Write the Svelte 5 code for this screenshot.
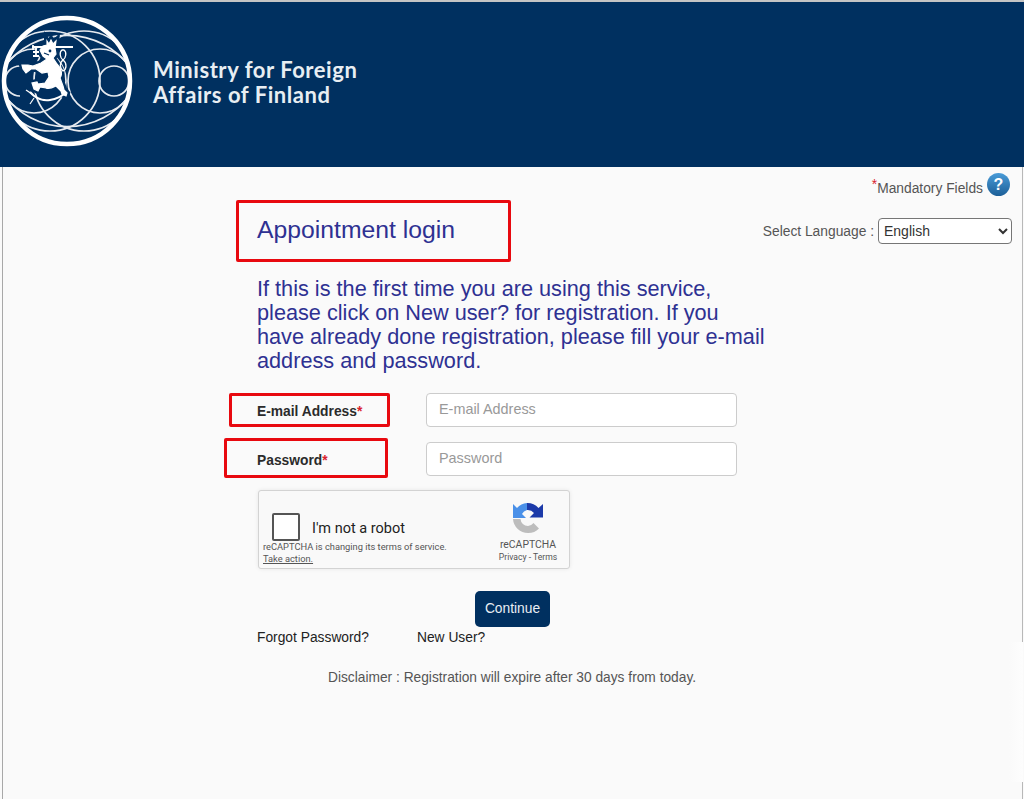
<script>
  let email = $state("");
  let password = $state("");
  let language = $state("English");
  let notRobot = $state(false);

  const lion = "M47 27 L49 30 L51 26 L53 30 L56 27 L55 34 L56 40 L53 44 L57 50 C61 54 63 60 60 64 L63 72 L64 76 L67 79 L66 82 L62 80 L61 77 L56 72 C52 74 48 75 46 74 L40 73 L38 77 L34 75 L32 69 L37 68 L38 70 L45 69 L49 63 L48 58 L42 59 L36 55 L31 55 L26 59 L23 55 L22 51 L28 51 L33 52 L41 49 L47 45 L43 42 L40 36 L43 32 L47 31 Z";
</script>

<div class="page">
  <header class="topbar">
    <svg class="logo" viewBox="0 0 134 134" aria-hidden="true">
      <defs>
        <clipPath id="ring-clip"><circle cx="67" cy="67" r="63" /></clipPath>
      </defs>
      <g fill="none" stroke="#fff">
        <g stroke-width="1.7" opacity="0.9" clip-path="url(#ring-clip)">
          <circle cx="114" cy="67" r="15" />
          <path d="M20 52 A15 15 0 0 0 20 82" />
          <circle cx="100" cy="67" r="32" />
          <circle cx="34" cy="67" r="32" />
          <circle cx="50" cy="67" r="50" />
          <circle cx="84" cy="67" r="50" />
          <path d="M5 52 A78 78 0 0 1 129 52" />
          <path d="M5 82 A78 78 0 0 0 129 82" />
        </g>
        <circle cx="67" cy="67" r="63" stroke-width="4.5" />
      </g>
      <!-- leijona -->
      <path d={lion} fill="#003060" stroke="#003060" stroke-width="6" />
      <path d="M32 33 L73 33" stroke="#fff" stroke-width="1.8" fill="none" />
      <path d={lion} fill="#fff" stroke="#fff" stroke-width="1.2" />
      <circle cx="50" cy="37" r="1.4" fill="#003060" />
      <path d="M44 39 L49 41" stroke="#003060" stroke-width="1.2" />
      <path d="M33 31 L33 36 M36 33 L36 43 M33 38 L39 38 M33 42 L39 42" stroke="#fff" stroke-width="1.8" fill="none" />
      <path d="M62 36 C59 38 60 44 63 46 C66 44 67 38 64 36 Z M63 46 C59 49 60 55 63 57 C67 55 67 49 63 46" stroke="#fff" stroke-width="1.3" fill="none" />
      <path d="M30 78 C36 85 44 87 50 86 C56 85 61 83 65 79" stroke="#fff" stroke-width="2" fill="none" />
      <path d="M26 76 L32 80" stroke="#fff" stroke-width="1.4" fill="none" />
      <path d="M34 84 L30 90" stroke="#fff" stroke-width="1.2" fill="none" />
    </svg>
    <div class="ministry">Ministry for Foreign<br />Affairs of Finland</div>
  </header>

  <main class="content">
    <section class="form">
      <div class="title-wrap">
        <h1>Appointment login</h1>
        <span class="mark mark-title"></span>
      </div>
      <p class="intro">
        If this is the first time you are using this service, please click on New user? for registration. If you have already done registration, please fill your e-mail address and password.
      </p>

      <div class="field first">
        <label for="email">E-mail Address<span class="req">*</span></label>
        <input id="email" type="text" placeholder="E-mail Address" bind:value={email} />
        <span class="mark mark-email"></span>
      </div>
      <div class="field">
        <label for="password">Password<span class="req">*</span></label>
        <input id="password" type="password" placeholder="Password" bind:value={password} />
        <span class="mark mark-password"></span>
      </div>

      <div class="captcha">
        <div class="captcha-left">
          <label class="robot">
            <input type="checkbox" bind:checked={notRobot} />
            <span>I'm not a robot</span>
          </label>
          <div class="terms">reCAPTCHA is changing its terms of service.</div>
          <a class="terms action" href="#top">Take action.</a>
        </div>
        <div class="captcha-right">
          <svg class="recaptcha" viewBox="0 0 32 32" aria-hidden="true">
            <path fill="#4a90e8" d="M15 1 A15 15 0 0 0 5 6 L1 2 L1 16 L14 16 L10 12 A7.5 7.5 0 0 1 15 8 Z" />
            <path fill="#1c3aa9" d="M15 1 A15 15 0 0 1 26.5 6 L31 2 L31 15.5 L17.5 15.5 L22 11 A8 8 0 0 0 15 8 Z" />
            <path fill="#bdbdbd" d="M1 17 L8.5 17 A7.5 7.5 0 0 0 16 24 A8 8 0 0 0 21.5 21 L27 26.5 A15 15 0 0 1 16 31 A15 15 0 0 1 1 17 Z" />
          </svg>
          <div class="brand">reCAPTCHA</div>
          <div class="links">Privacy - Terms</div>
        </div>
      </div>

      <button class="continue" type="button">Continue</button>
      <div class="user-links">
        <a href="#top">Forgot Password?</a>
        <a href="#top">New User?</a>
      </div>
      <p class="disclaimer">Disclaimer : Registration will expire after 30 days from today.</p>
    </section>

    <aside class="side">
      <div class="mandatory">
        <span class="mand-text"><span class="req sup">*</span>Mandatory Fields</span>
        <span class="help">?</span>
      </div>
      <div class="lang">
        <label for="lang">Select Language :</label>
        <select id="lang" bind:value={language}>
          <option>English</option>
          <option>Suomi</option>
          <option>Svenska</option>
        </select>
      </div>
    </aside>
    <div class="edge-fade"></div>
  </main>
</div>

<style>
  :global(body) {
    margin: 0;
    background: #fafafa;
    font-family: "Liberation Sans", Arial, sans-serif;
  }

  .page {
    height: 799px;
    box-sizing: border-box;
    overflow: hidden;
    display: flex;
    flex-direction: column;
    background: #fafafa;
    border-top: 2px solid #c4c4c4;
  }

  .topbar {
    height: 165px;
    flex: none;
    background: #003060;
    display: flex;
    align-items: center;
    gap: 19px;
  }

  .logo {
    width: 134px;
    height: 134px;
    flex: none;
    margin-top: -8px;
  }

  .ministry {
    color: #e8eef3;
    font-family: Lato, "Open Sans", sans-serif;
    font-weight: 700;
    font-size: 22px;
    line-height: 25px;
    letter-spacing: 0.55px;
    margin-top: -6px;
  }

  .content {
    position: relative;
    flex: 1;
    display: flex;
    margin-left: 2px;
    margin-right: 1px;
    border-left: 1px solid #a8a8a8;
    border-right: 1px solid #b8b8b8;
  }

  .edge-fade {
    position: absolute;
    right: -1px;
    top: 475px;
    width: 14px;
    height: 140px;
    background: linear-gradient(to right, #fafafa, #fdfdfd);
  }

  .form {
    width: 506px;
    flex: none;
    padding-left: 254px;
    box-sizing: content-box;
  }

  .title-wrap {
    position: relative;
    margin-top: 46px;
  }

  h1 {
    margin: 0;
    color: #2e3192;
    font-size: 24.75px;
    line-height: 33px;
    font-weight: 400;
  }

  .intro {
    margin: 31px -4px 0 0;
    color: #2e3192;
    font-size: 21.7px;
    line-height: 24px;
  }

  .mark {
    position: absolute;
    border: 3px solid #e8090f;
    border-radius: 2px;
    box-sizing: border-box;
  }

  .mark-title {
    left: -21px;
    top: -13px;
    width: 275px;
    height: 62px;
  }

  .mark-email {
    left: -28px;
    top: 0;
    width: 161px;
    height: 34px;
  }

  .mark-password {
    left: -33px;
    top: -4px;
    width: 164px;
    height: 40px;
  }

  .field {
    position: relative;
    display: flex;
    align-items: center;
    width: 480px;
    height: 34px;
    margin-top: 15px;
  }

  .field.first {
    margin-top: 20px;
  }

  .field label {
    width: 169px;
    flex: none;
    color: #2b2b2b;
    font-size: 13.8px;
    font-weight: 700;
    padding-top: 2px;
  }

  .req {
    color: #d9232e;
  }

  .sup {
    position: relative;
    top: -4px;
  }

  .field input {
    width: 311px;
    height: 34px;
    box-sizing: border-box;
    padding: 0 12px 2px;
    border: 1px solid #ccc;
    border-radius: 4px;
    background: #fff;
    color: #333;
    font-family: inherit;
    font-size: 14.4px;
    margin-top: -1px;
  }

  .field input::placeholder {
    color: #999;
    opacity: 1;
  }

  .captcha {
    width: 312px;
    height: 79px;
    margin-top: 14px;
    margin-left: 1px;
    box-sizing: border-box;
    display: flex;
    justify-content: space-between;
    background: #f9f9f9;
    border: 1px solid #d3d3d3;
    border-radius: 3px;
    box-shadow: 0 0 4px rgba(0, 0, 0, 0.08);
    font-family: Roboto, sans-serif;
  }

  .captcha-left {
    padding: 22px 0 0 4px;
    color: #555;
  }

  .robot {
    display: flex;
    align-items: center;
    gap: 12px;
    margin-left: 9px;
    color: #222;
    font-size: 14.5px;
  }

  .robot span {
    padding-top: 3px;
  }

  .robot input {
    appearance: none;
    width: 28px;
    height: 28px;
    margin: 0;
    background: #fff;
    border: 2px solid #555;
    border-radius: 2px;
  }

  .robot input:checked {
    background: #009e55;
  }

  .terms {
    font-size: 9.3px;
    line-height: 12px;
    color: #555;
    white-space: nowrap;
  }

  .action {
    display: block;
    text-decoration: underline;
  }

  .captcha-right {
    width: 70px;
    margin-right: 6px;
    display: flex;
    flex-direction: column;
    align-items: center;
    padding-top: 11px;
    color: #555;
  }

  .recaptcha {
    width: 32px;
    height: 32px;
    flex: none;
  }

  .brand {
    font-size: 10.4px;
    line-height: 12px;
    margin-top: 5px;
    white-space: nowrap;
  }

  .links {
    font-size: 8.6px;
    line-height: 12px;
    white-space: nowrap;
  }

  .continue {
    display: block;
    width: 75px;
    height: 36px;
    margin: 22px 0 0 218px;
    padding: 0 0 2px;
    border: none;
    border-radius: 5px;
    background: #003060;
    color: #e9eef3;
    font-family: inherit;
    font-size: 13.8px;
  }

  .user-links {
    display: flex;
    gap: 48px;
    margin-top: 3px;
    font-size: 13.8px;
    line-height: 16px;
  }

  .user-links a {
    color: #222;
    text-decoration: none;
  }

  .disclaimer {
    margin: 24px 0 0 71px;
    color: #555;
    font-size: 13.75px;
    line-height: 16px;
    white-space: nowrap;
  }

  .side {
    flex: 1;
    min-width: 0;
    display: flex;
    flex-direction: column;
    align-items: flex-end;
    padding-right: 10px;
    font-size: 13.8px;
    color: #555;
  }

  .mandatory {
    display: flex;
    align-items: center;
    gap: 4px;
    margin-top: 6px;
    padding-right: 2px;
  }

  .mand-text {
    padding-top: 7px;
  }

  .help {
    width: 23px;
    height: 23px;
    border-radius: 50%;
    background: linear-gradient(#4a9cd8, #1c5f98);
    color: #fff;
    font-size: 16px;
    font-weight: 700;
    line-height: 23px;
    text-align: center;
  }

  .lang {
    display: flex;
    align-items: center;
    gap: 4px;
    margin-top: 22px;
    white-space: nowrap;
  }

  select {
    width: 134px;
    height: 26px;
    padding-left: 1px;
    border: 1px solid #767676;
    border-radius: 4px;
    background: #fff;
    color: #333;
    font-family: inherit;
    font-size: 14px;
  }
</style>
